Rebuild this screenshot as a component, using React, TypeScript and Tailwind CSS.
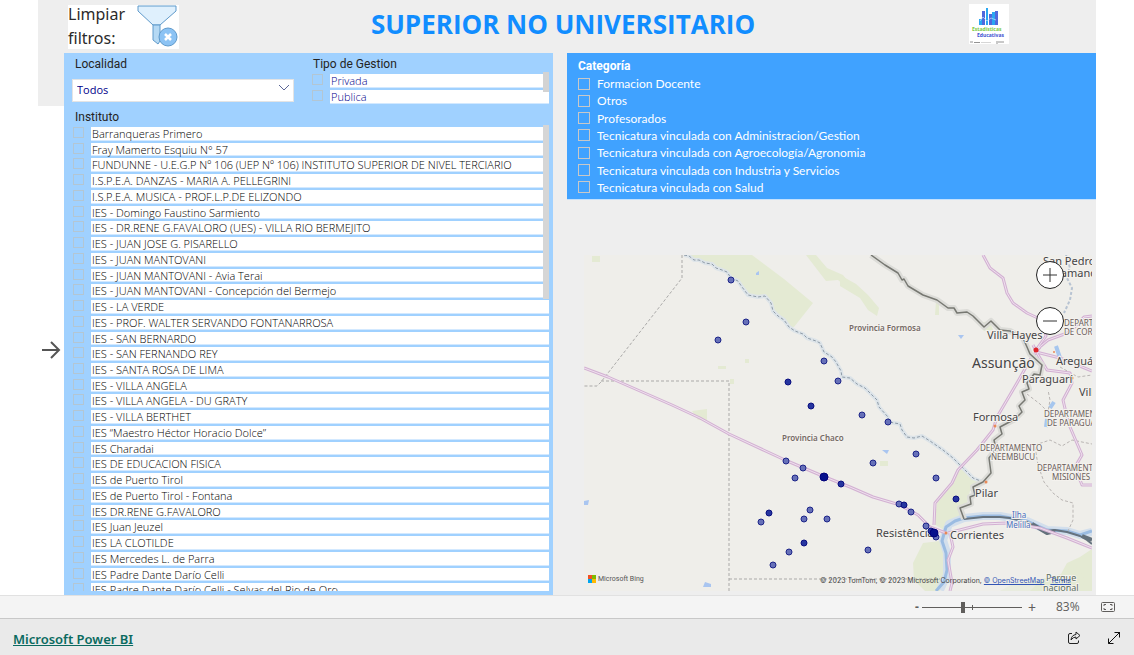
import { useState } from "react";
import clsx from "clsx";

const institutes = [
  "Barranqueras Primero",
  "Fray Mamerto Esquiu N° 57",
  "FUNDUNNE - U.E.G.P Nº 106 (UEP Nº 106) INSTITUTO SUPERIOR DE NIVEL TERCIARIO",
  "I.S.P.E.A. DANZAS - MARIA A. PELLEGRINI",
  "I.S.P.E.A. MUSICA - PROF.L.P.DE ELIZONDO",
  "IES - Domingo Faustino Sarmiento",
  "IES - DR.RENE G.FAVALORO (UES) - VILLA RIO BERMEJITO",
  "IES - JUAN JOSE G. PISARELLO",
  "IES - JUAN MANTOVANI",
  "IES - JUAN MANTOVANI - Avia Terai",
  "IES - JUAN MANTOVANI - Concepción del Bermejo",
  "IES - LA VERDE",
  "IES - PROF. WALTER SERVANDO FONTANARROSA",
  "IES - SAN BERNARDO",
  "IES - SAN FERNANDO REY",
  "IES - SANTA ROSA DE LIMA",
  "IES - VILLA ANGELA",
  "IES - VILLA ANGELA - DU GRATY",
  "IES - VILLA BERTHET",
  "IES “Maestro Héctor Horacio Dolce”",
  "IES Charadai",
  "IES DE EDUCACION FISICA",
  "IES de Puerto Tirol",
  "IES de Puerto Tirol - Fontana",
  "IES DR.RENE G.FAVALORO",
  "IES Juan Jeuzel",
  "IES LA CLOTILDE",
  "IES Mercedes L. de Parra",
  "IES Padre Dante Darío Celli",
  "IES Padre Dante Darío Celli - Selvas del Rio de Oro",
];

const categories = [
  "Formacion Docente",
  "Otros",
  "Profesorados",
  "Tecnicatura vinculada con Administracion/Gestion",
  "Tecnicatura vinculada con Agroecología/Agronomia",
  "Tecnicatura vinculada con Industria y Servicios",
  "Tecnicatura vinculada con Salud",
];

// x, y, number of overlapping schools
const schools = [
  [731, 280, 1], [746, 322, 1], [718, 340, 1], [824, 361, 1], [838, 381, 1],
  [862, 415, 1], [888, 422, 1], [916, 454, 1], [873, 463, 1], [936, 478, 1],
  [786, 461, 1], [803, 468, 1], [795, 478, 1], [810, 510, 1], [804, 519, 1],
  [827, 519, 1], [761, 522, 1], [789, 552, 1], [773, 565, 1], [868, 550, 1],
  [899, 504, 1], [911, 512, 1], [926, 526, 1], [936, 537, 1], [788, 382, 2],
  [811, 406, 2], [841, 484, 2], [769, 513, 2], [804, 543, 2], [904, 505, 2],
  [956, 499, 2], [931, 531, 2], [824, 477, 3], [934, 533, 3],
];

const roads = [
  "M584 368 608 377 640 391 672 405 700 418 729 434 785 460 825 477 850 487 873 497 900 505 918 515 930 527 946 533",
  "M1040 347 1030 360 1017 383 997 417 993 430 977 450 958 470 952 483 935 503 934 525",
  "M983 255 990 268 1003 278 1007 293 1013 303 1027 313 1042 320 1046 336 1036 350",
  "M1033 345 1037 353 1047 370 1070 373 1072 383 1063 400 1067 417 1070 427 1082 455 1075 467 1082 485 1092 485",
  "M1036 352 1060 358 1092 371",
  "M1036 350 1048 340 1070 332 1084 317 1092 316",
  "M950 533 953 547 948 560 952 583 950 591",
  "M948 533 983 524 1007 523 1040 528 1067 538 1092 548",
];

const border =
  "M871 255 885 265 898 273 902 280 904 279 908 286 923 295 937 300 948 308 954 308 957 313 967 312 973 316 984 327 991 321 1000 330 1010 331 1023 338 1027 347 1030 354 1042 365 1040 375 1034 374 1027 383 1029 389 1022 392 1025 400 1019 406 1022 412 1015 419 1000 427 1002 434 994 440 996 449 989 458 991 473 983 482 973 487 975 495 970 497 971 504 960 508 964 519";

const bermejo =
  "M684 255 689 256 694 260 699 260 705 263 712 264 716 268 722 270 727 272 731 278 738 281 742 287 748 295 758 297 765 296 771 303 773 311 778 316 784 320 789 327 795 331 803 334 807 338 816 341 820 343 824 352 832 357 836 362 841 371 842 377 850 378 857 384 865 388 873 396 877 400 879 407 888 417 889 422 900 424 902 430 907 437 914 438 922 436 930 441 943 450 953 458 960 465 973 478 983 482";

function Label({ x, y, size, children, className }: { x: number; y: number; size: number; children: string; className?: string }) {
  return (
    <text
      x={x}
      y={y}
      fontSize={size}
      strokeWidth={2}
      paintOrder="stroke"
      className={clsx("stroke-[#f4f2ee]", className || "fill-[#444446]")}
    >
      {children}
    </text>
  );
}

function MapView() {
  const dept = "fill-[#6b5e5c]";

  return (
    <div className="relative ml-[17px] mr-1 mt-[55px] h-[336px] overflow-hidden bg-[#efeeea]">
      <svg
        viewBox="584 255 508 336"
        preserveAspectRatio="xMidYMid slice"
        className="h-full w-full font-['Noto_Sans',sans-serif]"
        role="img"
        aria-label="Mapa de institutos"
      >
        <g className="fill-[#e4ead3]">
          <path d="M684 255H752L784 279 813 303 794 327 789 327 778 316 765 296 748 296 738 282 727 272 705 263Z" />
          <path d="M806 255H816L827 268 843 275 850 284 850 290 838 280 826 281Z" />
          <path d="M840 275 856 284 868 295 879 308 877 316 868 310 860 298 840 286Z" />
          <path d="M960 467 982 483 970 491 967 503 959 510 963 520 950 524 944 530 934 524 937 503 953 483Z" />
          <path d="M923 543 940 541 945 553 946 572 940 591H925L914 580 913 563Z" />
          <path d="M1092 549 1080 557 1067 563 1061 574 1042 579 1030 591H1092Z" />
          <path d="M1072 577 1062 591 1000 591 1015 583 1040 580Z" opacity=".5" />
          <path d="M592 256H600V262H592ZM692 411 707 409V420H698ZM718 366H726V369H718ZM730 379H734V384H730ZM745 359H749V363H745ZM880 461H888V466H880ZM936 301H939V315H935ZM978 323 990 321 993 330 984 331ZM1059 583 1065 573 1080 566 1085 585Z" />
        </g>

        {/* rivers */}
        <g fill="none" strokeLinejoin="round">
          <path d={bermejo} stroke="#dde4e9" strokeWidth="4" />
          <path d="M940 590 947 575 947 553 943 540 949 524 964 518 983 516 1000 516 1027 521 1047 530 1067 531 1080 535 1092 532" stroke="#d3dfec" strokeWidth="8" />
          <path d="M936 591 944 582 947 570 946 553 942 541 946 527 955 521 964 518 983 516 1000 516 1027 521 1047 530 1067 531 1080 535 1092 531" stroke="#9bbce2" strokeWidth="3" />
          <path d="M964 519 983 517 1000 517 1010 518 1027 522 1036 527 1047 531 1055 530 1067 532 1080 536 1087 540 1092 544" stroke="#66737f" strokeWidth="2" />
          <path d="M1032 524 1047 533 1055 531M1082 536 1092 540" stroke="#64717c" strokeWidth="4" />
          <path d="M1066 255 1070 268 1066 276 1072 288 1070 300 1064 313" stroke="#b7c3d2" strokeWidth="2" strokeDasharray="3 2" />
          <path d="M1056 346 1060 358M1054 402 1050 408M1047 419 1046 427" stroke="#a6c6ee" strokeWidth="4" />
        </g>
        <path d="M756 273 759 271 759 275 756 275ZM958 335H964L961 339ZM882 450H889L887 454ZM584 501 589 500 588 505 584 505ZM705 582 711 584 711 587 703 587Z" className="fill-[#a9c5f0]" />

        {/* province and department limits */}
        <g fill="none" stroke="#aaa9a8" strokeDasharray="3 2">
          <path d="M682 255V278L601 382 597 386H584" />
          <path d="M601 381H729V591M729 579H940" />
          <path d={bermejo} stroke="#8d9aa6" />
          <path d="M1027 394 1040 404 1048 412 1050 400 1048 390M1035 445 1050 440 1062 446 1072 440 1092 444M1035 447 1038 465 1044 482 1053 493 1062 500 1073 503 1073 520 1068 531M1060 367 1078 377 1092 375" stroke="#b9b5b3" />
        </g>

        <g fill="none" strokeLinejoin="round">
          {roads.map((d) => (
            <path key={d} d={d} stroke="#d3b1d3" strokeWidth="3" />
          ))}
          {roads.map((d) => (
            <path key={d} d={d} stroke="#efe2ee" />
          ))}
          <path d={border} stroke="#dcdcd8" strokeWidth="6" />
          <path d={border} stroke="#777872" strokeWidth="1.500" />
        </g>

        <g className="fill-[#e88958]">
          <circle cx="995" cy="426" r="1.500" />
          <circle cx="986" cy="482" r="1.500" />
          <circle cx="946" cy="533" r="1.500" />
          <circle cx="1072" cy="378" r="1.500" />
          <circle cx="1054" cy="352" r="1" />
        </g>
        <circle cx="1036" cy="350" r="2.500" className="fill-[#e0262b]" />

        <Label x={849} y={331} size={8} className="fill-[#756a66] font-semibold">Provincia Formosa</Label>
        <Label x={782} y={441} size={8} className="fill-[#756a66] font-semibold">Provincia Chaco</Label>
        <Label x={1043} y={265} size={11}>San Pedro</Label>
        <Label x={1043} y={277} size={11}>Ycuamandiyú</Label>
        <Label x={987} y={339} size={11}>Villa Hayes</Label>
        <Label x={1064} y={326} size={8} className={dept}>DEPARTAMENTO</Label>
        <Label x={1064} y={335} size={8} className={dept}>DE CORDILLERA</Label>
        <Label x={972} y={368} size={14}>Assunção</Label>
        <Label x={1056} y={365} size={11}>Areguá</Label>
        <Label x={1022} y={383} size={11}>Paraguarí</Label>
        <Label x={1079} y={396} size={11}>Villarrica</Label>
        <Label x={1044} y={417} size={8} className={dept}>DEPARTAMENTO</Label>
        <Label x={1047} y={426} size={8} className={dept}>DE PARAGUARÍ</Label>
        <Label x={973} y={421} size={11}>Formosa</Label>
        <Label x={980} y={451} size={8} className={dept}>DEPARTAMENTO</Label>
        <Label x={991} y={460} size={8} className={dept}>NEEMBUCU</Label>
        <Label x={1037} y={471} size={8} className={dept}>DEPARTAMENTO</Label>
        <Label x={1052} y={480} size={8} className={dept}>MISIONES</Label>
        <Label x={975} y={497} size={11}>Pilar</Label>
        <Label x={1012} y={518} size={8} className="fill-[#4a6fc0]">Ilha</Label>
        <Label x={1006} y={528} size={8} className="fill-[#4a6fc0]">Melilla</Label>
        <Label x={950} y={539} size={11}>Corrientes</Label>
        <Label x={876} y={537} size={11}>Resistência</Label>
        <Label x={1046} y={581} size={9} className="fill-[#5d6f61]">Parque</Label>
        <Label x={1043} y={591} size={9} className="fill-[#5d6f61]">nacional</Label>

        {schools.map(([x, y, n]) => (
          <circle
            key={`${x}-${y}`}
            cx={x}
            cy={y}
            r={n === 3 ? 4 : 3}
            strokeWidth={1}
            className={clsx(
              n === 1 && "fill-[#6670b8] stroke-[#1c2488]",
              n === 2 && "fill-[#26359f] stroke-[#0a0f80]",
              n === 3 && "fill-[#07108c] stroke-[#00007a]"
            )}
          />
        ))}
      </svg>

      <div className="absolute right-[28px] top-[6px] flex flex-col gap-[18px]">
        <button aria-label="Acercar" className="flex size-7 items-center justify-center rounded-full border border-[#222] bg-white">
          <svg viewBox="0 0 16 16" className="size-4 stroke-[#333]"><path d="M8 1V15M1 8H15" /></svg>
        </button>
        <button aria-label="Alejar" className="flex size-7 items-center justify-center rounded-full border border-[#222] bg-white">
          <svg viewBox="0 0 16 16" className="size-4 stroke-[#333]"><path d="M1 8H15" /></svg>
        </button>
      </div>

      <div className="absolute bottom-[7px] left-1 flex items-center gap-[2px] font-['Roboto',sans-serif] text-[7px] leading-[10px] text-[#555]">
        <svg viewBox="0 0 8 8" className="size-2">
          <path d="M0 0H4V4H0Z" fill="#f25022" />
          <path d="M4 0H8V4H4Z" fill="#7fba00" />
          <path d="M0 4H4V8H0Z" fill="#00a4ef" />
          <path d="M4 4H8V8H4Z" fill="#ffb900" />
        </svg>
        Microsoft Bing
      </div>
      <div className="absolute bottom-[5px] right-[21px] flex gap-[6px] whitespace-nowrap font-['Inter',sans-serif] text-[7px] leading-[10px] text-[#444]">
        <span>
          © 2023 TomTom, © 2023 Microsoft Corporation,{" "}
          <a href="#osm" className="text-[#3355b5] underline">© OpenStreetMap</a>
        </span>
        <a href="#terms" className="text-[#3355b5] underline">Terms</a>
      </div>
    </div>
  );
}

function Logo() {
  return (
    <svg viewBox="0 0 40 40" className="mr-[87px] size-10 shrink-0 bg-white font-['Open_Sans',sans-serif]" role="img" aria-label="Estadísticas Educativas">
      <g fill="#2aa7f2">
        <path d="M10 15H13V21H10ZM17 4H19V21H17ZM23 8H26V21H23Z" />
      </g>
      <g fill="#5068dc">
        <path d="M13 7H16V21H13ZM20 10H23V21H20ZM26 7H29V21H26Z" />
      </g>
      <path d="M11 17 14 13 18 17 22 14 27 16" fill="none" stroke="#bfe2ff" strokeWidth=".7" />
      <text x="3" y="27" fontSize="5" className="fill-[#7ac943] font-bold">Estadísticas</text>
      <text x="8" y="33" fontSize="5" className="fill-[#3c50d0] font-bold">Educativas</text>
      <path d="M1 38H4M5 38.500H11M28 37V40M29 38H35" stroke="#777" strokeWidth=".8" />
      <path d="M12 38.500H22" stroke="#bbb" strokeWidth=".6" />
    </svg>
  );
}

function ListItem({ name, color }: { name: string; color: string }) {
  return (
    <li className="min-h-0 overflow-hidden">
      <label className="flex h-full gap-[7px]">
        <input type="checkbox" className="h-[11px] w-[11px] shrink-0 appearance-none border border-[#b3c6d3] checked:bg-[#1d4f9c]" />
        <span className={clsx("mb-[2px] min-w-0 flex-1 whitespace-nowrap border-b border-[#d3e9ff] bg-white pl-px font-['Open_Sans',sans-serif] text-[11px] font-light leading-[13px]", color)}>
          {name}
        </span>
      </label>
    </li>
  );
}

export default function App() {
  const [town, setTown] = useState("Todos");
  const [zoom, setZoom] = useState(41);

  return (
    <div className="flex min-h-screen flex-col bg-white font-['Noto_Sans',sans-serif]">
      <div className="mx-[38px] flex-1">
        <header className="flex h-[53px] items-start bg-[#eeeeee] pt-1">
          <button className="ml-[30px] mt-px flex h-11 w-[111px] shrink-0 bg-white text-left text-[16px] leading-6 text-[#2b2b2b]">
            <span className="-mt-[3px] w-[68px]">Limpiar filtros:</span>
            <svg viewBox="0 0 43 44" className="h-11 w-[43px] shrink-0" fill="#dff0fd" stroke="#5f9acb">
              <path d="M2 1H40V6L24 20H17L2 6Z" />
              <path d="M17 20H24V36L22 39 17 35Z" fill="#b5d9f4" />
              <circle cx="32" cy="32" r="9" fill="#8cc3f4" />
              <path d="M29 29 35 35M35 29 29 35" stroke="#fff" strokeWidth="2.500" />
            </svg>
          </button>
          <h1 className="flex-1 pr-[22px] text-center font-['Open_Sans',sans-serif] text-[26px] font-bold leading-10 text-[#118dff]">
            SUPERIOR NO UNIVERSITARIO
          </h1>
          <Logo />
        </header>

        <main className="flex">
          <div className="w-[26px] shrink-0">
            <div className="h-[53px] bg-[#eeeeee]" />
            <button aria-label="Siguiente" className="mt-[234px] flex w-full justify-center">
              <svg viewBox="0 0 20 20" className="size-5" fill="none" stroke="#555" strokeWidth="2">
                <path d="M1 10H18M10 2 18 10 10 18" />
              </svg>
            </button>
          </div>

          <section className="w-[489px] shrink-0 bg-[#a0d1ff]">
            <div className="flex h-[53px]">
              <div className="ml-2 w-[222px]">
                <label htmlFor="town" className="block pl-[3px] pt-1 font-['Roboto',sans-serif] text-[12px] leading-[15px] text-[#252423]">
                  Localidad
                </label>
                <div className="relative mt-1">
                  <select
                    id="town"
                    value={town}
                    onChange={(e) => setTown(e.target.value)}
                    className="h-[23px] w-full appearance-none border border-[#e4e4e4] bg-white pb-px pl-1 font-['Open_Sans',sans-serif] text-[11px] text-[#00008b]"
                  >
                    <option>Todos</option>
                    <option>Resistencia</option>
                    <option>Barranqueras</option>
                  </select>
                  <svg viewBox="0 0 12 12" className="pointer-events-none absolute right-1 top-[5px] size-3" fill="none" stroke="#5b6696">
                    <path d="M1 4 6 9 11 4" />
                  </svg>
                </div>
              </div>
              <fieldset className="relative ml-[18px] mr-1 min-w-0 flex-1">
                <legend className="pl-px pt-1 font-['Roboto',sans-serif] text-[12px] leading-[15px] text-[#252423]">Tipo de Gestion</legend>
                <ul className="mt-[2px] grid h-8 auto-rows-fr">
                  <ListItem name="Privada" color="text-[#00008b]" />
                  <ListItem name="Publica" color="text-[#00008b]" />
                </ul>
                <div className="absolute right-0 top-0 h-5 w-[6px] bg-[#d3d3d3]" />
              </fieldset>
            </div>

            <fieldset className="relative ml-[9px] mr-1 h-[489px] min-w-0">
              <legend className="pl-[2px] pt-1 font-['Roboto',sans-serif] text-[12px] leading-[15px] text-[#252423]">Instituto</legend>
              <div className="mt-[2px] h-[464px] overflow-hidden">
                <ul className="grid h-[472px] auto-rows-fr">
                  {institutes.map((name) => (
                    <ListItem key={name} name={name} color="text-black" />
                  ))}
                </ul>
              </div>
              <div className="absolute right-0 top-0 h-[174px] w-[6px] bg-[#d6d6d6]" />
            </fieldset>
          </section>

          <section className="min-w-0 flex-1 bg-[#eeeeee] pl-[14px]">
            <fieldset className="h-[147px] border-b border-[#c4e1fd] bg-[#40a2ff] pl-[11px] text-white">
              <legend className="float-left w-full pt-[5px] font-['Roboto',sans-serif] text-[12px] font-bold leading-[17px]">Categoría</legend>
              <ul className="clear-both grid h-[121px] auto-rows-fr font-['Lato',sans-serif] text-[12px] leading-[17px]">
                {categories.map((name) => (
                  <li key={name} className="min-h-0">
                    <label className="flex h-full items-center gap-[7px]">
                      <input type="checkbox" className="size-3 shrink-0 appearance-none border border-[#c8c8c8] checked:bg-white" />
                      {name}
                    </label>
                  </li>
                ))}
              </ul>
            </fieldset>
            <MapView />
          </section>
        </main>
      </div>

      <div className="flex h-6 items-center justify-end border-b border-t border-b-[#c8c8c8] border-t-[#e1e1e1] bg-[#f4f4f4] pr-[19px] text-[12px] text-[#605e5c]">
        <button aria-label="Reducir" className="w-[10px] text-center font-bold">-</button>
        <div className="relative flex w-[100px] items-center">
          <input
            type="range"
            aria-label="Zoom"
            value={zoom}
            onChange={(e) => setZoom(Number(e.target.value))}
            className="h-px w-full appearance-none bg-[#605e5c] [&::-webkit-slider-thumb]:h-[11px] [&::-webkit-slider-thumb]:w-1 [&::-webkit-slider-thumb]:appearance-none [&::-webkit-slider-thumb]:bg-[#605e5c]"
          />
          <span className="absolute left-1/2 h-[5px] w-px bg-[#605e5c]" />
        </div>
        <button aria-label="Ampliar" className="ml-1 w-3 text-[14px]">+</button>
        <span className="ml-[18px] w-[45px] font-['Open_Sans',sans-serif]">83%</span>
        <button aria-label="Ajustar a la página">
          <svg viewBox="0 0 14 12" className="h-3 w-[14px]" fill="none" stroke="#605e5c">
            <rect x=".5" y="1.500" width="13" height="9" rx="1" />
            <path d="M5 3.500H3V5M9 3.500H11V5M5 8.500H3V7M9 8.500H11V7" />
          </svg>
        </button>
      </div>

      <footer className="flex h-9 items-center justify-between bg-[#eaeaea] pl-[13px] pr-[13px]">
        <a href="#powerbi" className="pt-1 text-[13px] font-semibold leading-5 text-[#0b6a60] underline">Microsoft Power BI</a>
        <div className="flex gap-[26px] pt-[2px]">
          <button aria-label="Compartir">
            <svg viewBox="0 0 14 14" className="size-[14px]" fill="none" stroke="#222" strokeLinejoin="round">
              <path d="M5 2.500H3Q1.500 2.500 1.500 4V11Q1.500 12.500 3 12.500H10Q11.500 12.500 11.500 11V9.500" />
              <path d="M9 1 13 4.500 9 8V6Q6 6 4 9 4.500 4 9 3.500Z" />
            </svg>
          </button>
          <button aria-label="Pantalla completa">
            <svg viewBox="0 0 14 14" className="size-[14px]" fill="none" stroke="#111">
              <path d="M1.500 12.500 13 1M7.500 1.500H12.500V6.500M1.500 7.500V12.500H6.500" />
            </svg>
          </button>
        </div>
      </footer>
    </div>
  );
}
